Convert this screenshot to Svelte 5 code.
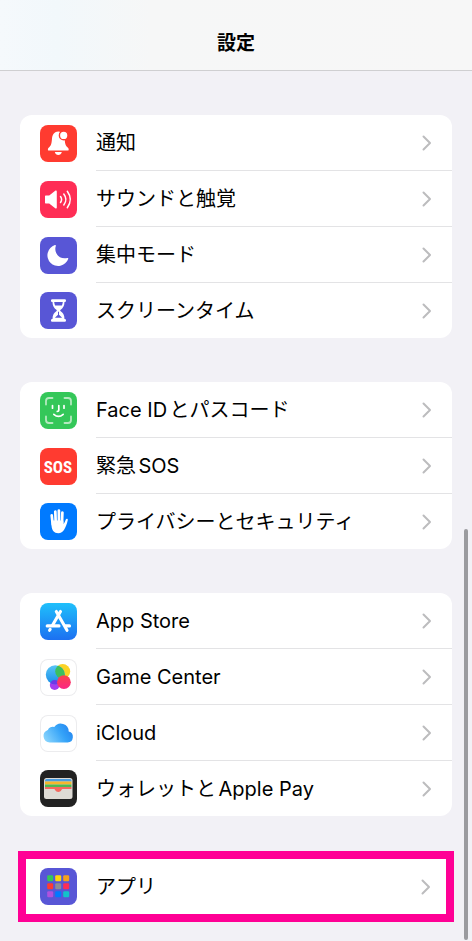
<script lang="ts">
	type Row = { icon: string; label: string }

	const groups: Row[][] = [
		[
			{ icon: 'bell', label: '通知' },
			{ icon: 'sound', label: 'サウンドと触覚' },
			{ icon: 'moon', label: '集中モード' },
			{ icon: 'hourglass', label: 'スクリーンタイム' }
		],
		[
			{ icon: 'face', label: 'Face IDとパスコード' },
			{ icon: 'sos', label: '緊急SOS' },
			{ icon: 'hand', label: 'プライバシーとセキュリティ' }
		],
		[
			{ icon: 'store', label: 'App Store' },
			{ icon: 'game', label: 'Game Center' },
			{ icon: 'cloud', label: 'iCloud' },
			{ icon: 'wallet', label: 'ウォレットとApple Pay' }
		]
	]

	const apps: Row = { icon: 'apps', label: 'アプリ' }

	const tiles = [
		'#34c759', '#ffd60a', '#f5a11c',
		'#ff3b30', '#8e8e93', '#ff2d55',
		'#af52de', '#007aff', '#12c3c9'
	]
</script>

{#snippet glyph(icon: string)}
	<svg viewBox="0 0 37 37" aria-hidden="true">
		{#if icon === 'bell'}
			<path
				fill="#fff"
				d="M18.3 6.5C14.5 6.5 12.4 9.5 12 13.500C11.600 18.500 11.200 20.500 9.200 22.200C8.300 23 7.900 23.600 7.900 24.400C7.900 25.200 8.400 25.600 9.200 25.600H27.400C28.200 25.600 28.700 25.200 28.700 24.400C28.700 23.600 28.300 23 27.400 22.200C25.400 20.500 25 18.500 24.600 13.500C24.200 9.500 22.100 6.500 18.300 6.500Z"
			/>
			<path fill="#fff" d="M14.800 27h7c-.4 1.900-1.800 3-3.500 3s-3.100-1.100-3.500-3z" />
			<circle cx="23.700" cy="10.400" r="4.300" fill="#fff" stroke="#ff3b30" stroke-width="1.400" />
		{:else if icon === 'sound'}
			<path
				fill="#fff"
				d="M6 14.500h3.200l6-4.800c.8-.6 1.600-.2 1.600.8v16c0 1-.8 1.400-1.600.8l-6-4.800H6c-.7 0-1-.4-1-1v-6c0-.6.300-1 1-1z"
			/>
			<path
				fill="none"
				stroke="#fff"
				stroke-width="1.500"
				stroke-linecap="round"
				d="M20.500 15.500q2.200 3 0 6M23.800 13q4.200 5.500 0 11M27.300 10.300q6 8.200 0 16.400"
			/>
		{:else if icon === 'moon'}
			<path
				fill="#fff"
				d="M14.900 8.100c.7-.3 1.100.1.900.8-2.300 7.500 3.800 14 11.500 12.100.8-.2 1.200.2.900.9A10.700 10.700 0 1 1 14.900 8.100z"
			/>
		{:else if icon === 'hourglass'}
			<path
				fill="#fff"
				d="M12.200 7.300h12.600c1.600 0 1.600 2.800 0 2.800h-.3c0 4-1.700 6.300-3.800 7.700-.7.500-.7.900 0 1.400 2.100 1.400 3.800 3.700 3.800 7.700h.3c1.600 0 1.600 2.800 0 2.800H12.200c-1.600 0-1.600-2.800 0-2.800h.3c0-4 1.700-6.300 3.800-7.700.7-.5.7-.9 0-1.400-2.100-1.400-3.800-3.700-3.800-7.700h-.3c-1.600 0-1.600-2.800 0-2.800z"
			/>
			<path
				fill="#5856d6"
				d="M14.200 10.100h8.600c-.1 1.300-.4 2.400-.9 3.400h-6.800c-.5-1-.8-2.100-.9-3.400zM18 19.800h1v3l3.100 3h-7.200l3.100-3z"
			/>
		{:else if icon === 'face'}
			<path
				fill="none"
				stroke="#b4e9bf"
				stroke-width="1.800"
				stroke-linecap="round"
				d="M6 12.500V9a3 3 0 0 1 3-3h3.500M24.500 6H28a3 3 0 0 1 3 3v3.500M31 24.500V28a3 3 0 0 1-3 3h-3.500M12.500 31H9a3 3 0 0 1-3-3v-3.500"
			/>
			<path
				fill="none"
				stroke="#fff"
				stroke-width="1.700"
				stroke-linecap="round"
				d="M12.500 13.500v2.700M24 13.500v2.700M18.800 13.500v4.800q0 1.100-1.500 1.100M13.800 22.300q4.700 4.200 9.400 0"
			/>
		{:else if icon === 'sos'}
			<text x="18" y="25" text-anchor="middle">SOS</text>
		{:else if icon === 'hand'}
			<path
				fill="none"
				stroke="#fff"
				stroke-width="2.700"
				stroke-linecap="round"
				d="M11.700 12.300l1 9M15.300 8.500l.4 11M18.900 7.500v11M22.400 9.500l-.4 10"
			/>
			<path
				fill="#fff"
				d="M11.400 17.500h11.900l.4 3.500c1-1.700 1.600-3.300 2.100-4.600.6-1.300 2.400-.8 2 .7-.9 4.200-2.200 7.200-3.700 9.600-1.400 2.300-3.200 3.500-5.800 3.500-4.300 0-6.300-2.900-6.700-7z"
			/>
		{:else if icon === 'store'}
			<g fill="none" stroke="#fff" stroke-width="3.100" stroke-linecap="round">
				<path d="M20.500 8.500L12.500 22.300M16.300 8.500L27 27.300M10.200 26.300L9.600 27.300" />
				<path d="M7.200 22.900H19M25.500 22.900h4" />
			</g>
		{:else if icon === 'game'}
			<defs>
				<linearGradient id="game-blue" x1="0" y1="0" x2="0" y2="1">
					<stop offset="0" stop-color="#59c5f6" />
					<stop offset="1" stop-color="#168de8" />
				</linearGradient>
				<linearGradient id="game-red" x1="0" y1="0" x2="0" y2="1">
					<stop offset="0" stop-color="#fb424c" />
					<stop offset="1" stop-color="#fb2685" />
				</linearGradient>
				<clipPath id="game-overlap"><circle cx="15.300" cy="15.800" r="9.500" /></clipPath>
			</defs>
			<circle cx="22.700" cy="12.500" r="7.500" fill="#fbd325" />
			<circle cx="14.700" cy="26" r="4.900" fill="#a43cf0" />
			<circle cx="15.300" cy="15.800" r="9.500" fill="url(#game-blue)" />
			<circle cx="22.700" cy="12.500" r="7.500" fill="#3dbf5e" clip-path="url(#game-overlap)" />
			<circle cx="14.700" cy="26" r="4.900" fill="#6c38e8" clip-path="url(#game-overlap)" />
			<circle cx="23.900" cy="23.200" r="6.900" fill="url(#game-red)" />
		{:else if icon === 'cloud'}
			<defs>
				<linearGradient id="cloud-blue" x1="0" y1=".7" x2="1" y2=".3">
					<stop offset="0" stop-color="#86d3fd" />
					<stop offset=".6" stop-color="#35a3f8" />
					<stop offset="1" stop-color="#2384f0" />
				</linearGradient>
			</defs>
			<path
				fill="url(#cloud-blue)"
				d="M9.800 27.500a6.500 6.500 0 0 1-2-12.600 5.200 5.200 0 0 1 6.500-2.800 7.900 7.900 0 0 1 14.400 4.400 5.600 5.600 0 0 1-1.100 11z"
			/>
		{:else if icon === 'wallet'}
			<rect x="4" y="8" width="28.500" height="21" rx="2.500" fill="#dedbd5" />
			<path fill="#4a9de0" d="M5 11.500v-1A1.500 1.500 0 0 1 6.500 9H30a1.500 1.500 0 0 1 1.500 1.500v1z" />
			<path fill="#f6b62d" d="M5 11.500h26.500v3H5z" />
			<path fill="#4cba53" d="M5 14.500h26.500V17H5z" />
			<path
				fill="#f4695f"
				d="M5 17h26.500v2h-8.500c-.9 0-1.200.4-1.700 1.200-.6 1-1.600 1.700-3 1.700s-2.400-.7-3-1.700c-.5-.8-.8-1.200-1.700-1.200H5z"
			/>
		{:else if icon === 'apps'}
			{#each tiles as fill, i}
				<rect
					x={7.2 + (i % 3) * 8}
					y={7.2 + Math.floor(i / 3) * 8}
					width="6"
					height="6"
					rx="1.200"
					{fill}
				/>
			{/each}
		{/if}
	</svg>
{/snippet}

{#snippet entry(row: Row)}
	<a class="row" href="#{row.icon}">
		<span class="icon {row.icon}">{@render glyph(row.icon)}</span>
		<span class="body">
			<span class="label">{row.label}</span>
			<svg class="chevron" viewBox="0 0 10 16" aria-hidden="true">
				<path d="M1.500 1.500L8 8l-6.500 6.500" />
			</svg>
		</span>
	</a>
{/snippet}

<header>
	<h1>設定</h1>
</header>

<main>
	{#each groups as rows}
		<ul class="card">
			{#each rows as row}
				<li>{@render entry(row)}</li>
			{/each}
		</ul>
	{/each}

	<div class="highlight">{@render entry(apps)}</div>
</main>

<div class="scrollbar"></div>

<style>
	:global(body) {
		background: #f2f1f6;
		color: #000;
		font-family: Inter, 'Noto Sans CJK JP', sans-serif;
	}

	header {
		box-sizing: border-box;
		display: flex;
		justify-content: center;
		height: 71px;
		padding-top: 30px;
		border-bottom: 1px solid #cfcfd1;
		background: linear-gradient(90deg, #f5f9fc, #f2f8fb 12%, #f6f7f7 32%, #f7f7f7);
	}

	h1 {
		margin: 0;
		font-size: 19px;
		font-weight: 700;
		line-height: 28px;
	}

	main {
		display: flex;
		flex-direction: column;
		gap: 44px;
		padding: 44px 20px 19px;
	}

	.card {
		margin: 0;
		padding: 0;
		list-style: none;
		border-radius: 12px;
		background: #fff;
		overflow: hidden;
	}

	.row {
		display: flex;
		align-items: center;
		gap: 19px;
		padding-left: 20px;
		color: inherit;
		text-decoration: none;
	}

	.body {
		flex: 1;
		display: flex;
		align-items: center;
		justify-content: space-between;
		height: 55px;
		padding-right: 20px;
	}

	li:not(:last-child) .body {
		border-bottom: 1px solid #e3e3e5;
	}

	.label {
		font-size: 20px;
		line-height: 28px;
		white-space: nowrap;
		text-autospace: normal;
	}

	.chevron {
		width: 10px;
		height: 16px;
		fill: none;
		stroke: #bcbcbe;
		stroke-width: 2;
		stroke-linecap: round;
		stroke-linejoin: round;
	}

	.icon {
		width: 37px;
		height: 37px;
		border-radius: 8px;
		overflow: hidden;
	}

	.icon svg {
		display: block;
		width: 37px;
		height: 37px;
	}

	.icon text {
		fill: #fff;
		font: 700 17px 'Liberation Sans Narrow', 'Roboto Condensed', Roboto, sans-serif;
	}

	.bell,
	.sos {
		background: #ff3b30;
	}

	.sound {
		background: #ff2d55;
	}

	.moon,
	.hourglass,
	.apps {
		background: #5856d6;
	}

	.face {
		background: #34c759;
	}

	.hand {
		background: #007aff;
	}

	.store {
		background: linear-gradient(#1fc0fb, #1c70f1);
	}

	.game,
	.cloud {
		background: #fff;
		box-shadow: inset 0 0 0 1px #ececee;
	}

	.wallet {
		background: #222;
	}

	.highlight {
		margin: -9px -2px 0;
		border: 8px solid #ff0095;
		background: #fff;
	}

	.highlight .row {
		padding-left: 14px;
	}

	.highlight .body {
		padding-right: 15px;
	}

	.scrollbar {
		position: fixed;
		right: 4px;
		bottom: 1px;
		width: 4px;
		height: 411px;
		border-radius: 2px;
		background: #9b9b9f;
	}
</style>
